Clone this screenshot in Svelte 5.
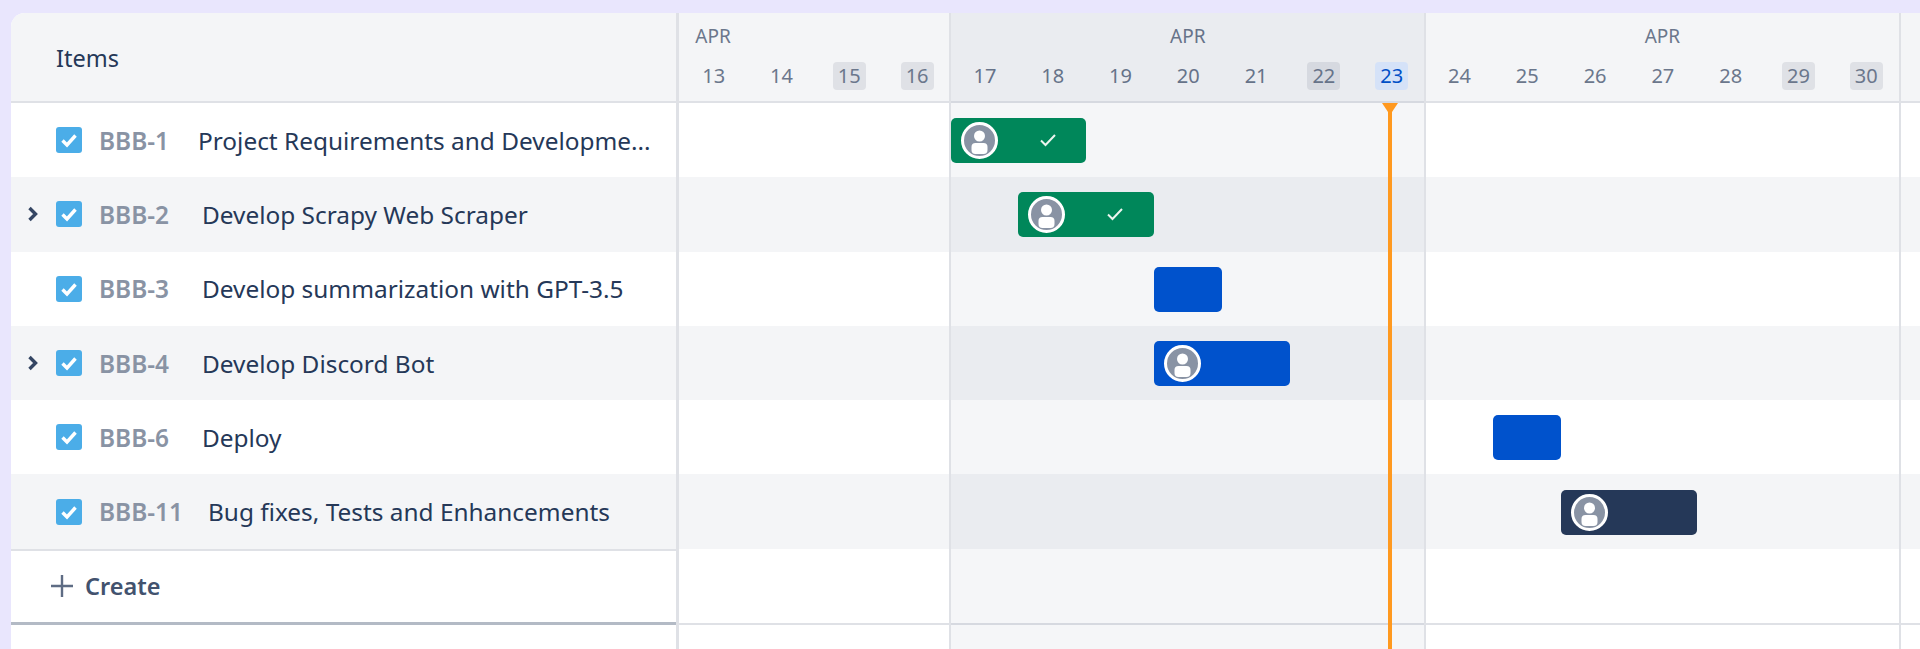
<script>
	const dayWidth = 67.8;

	const items = [
		{ key: 'BBB-1', keyWidth: 99, title: 'Project Requirements and Developme...', bar: { start: 4, days: 2, color: 'green', avatar: true, done: true } },
		{ key: 'BBB-2', keyWidth: 103, title: 'Develop Scrapy Web Scraper', expand: true, bar: { start: 5, days: 2, color: 'green', avatar: true, done: true } },
		{ key: 'BBB-3', keyWidth: 103, title: 'Develop summarization with GPT-3.5', bar: { start: 7, days: 1, color: 'blue' } },
		{ key: 'BBB-4', keyWidth: 103, title: 'Develop Discord Bot', expand: true, bar: { start: 7, days: 2, color: 'blue', avatar: true } },
		{ key: 'BBB-6', keyWidth: 103, title: 'Deploy', bar: { start: 12, days: 1, color: 'blue' } },
		{ key: 'BBB-11', keyWidth: 109, title: 'Bug fixes, Tests and Enhancements', bar: { start: 13, days: 2, color: 'navy', avatar: true } }
	];

	const weeks = [
		{ days: [13, 14, 15, 16], first: true },
		{ days: [17, 18, 19, 20, 21, 22, 23], shaded: true },
		{ days: [24, 25, 26, 27, 28, 29, 30] }
	];
	const weekend = [15, 16, 22, 29, 30];
</script>

<div class="card">
	<section class="list">
		<div class="list-head">Items</div>
		{#each items as item, i}
			<div class="item" class:alt={i % 2 === 1}>
				<span class="chevron">
					{#if item.expand}
						<svg width="12" height="16" viewBox="0 0 12 16"><path d="M2.5 2 L8.5 8 L2.5 14" fill="none" stroke="#344563" stroke-width="3.4" /></svg>
					{/if}
				</span>
				<span class="check">
					<svg width="26" height="26" viewBox="0 0 26 26"><path d="M6.5 13.5 L11 18 L19.5 8.5" fill="none" stroke="#fff" stroke-width="3.4" /></svg>
				</span>
				<span class="key" style="width:{item.keyWidth}px">{item.key}</span>
				<span class="title">{item.title}</span>
			</div>
		{/each}
		<div class="create">
			<svg width="24" height="24" viewBox="0 0 24 24"><path d="M12 1 V23 M1 12 H23" stroke="#5e6c84" stroke-width="2.4" /></svg>
			<span>Create</span>
		</div>
	</section>

	<section class="chart">
		<div class="chart-head">
			{#each weeks as week}
				<div class="week" class:first={week.first} style="width:{week.days.length * dayWidth}px">
					<div class="month">APR</div>
					<div class="days">
						{#each week.days as d}
							<div class="day">
								<span class:weekend={weekend.includes(d)} class:today={d === 23}>{d}</span>
							</div>
						{/each}
					</div>
				</div>
			{/each}
		</div>

		{#each items as item, i}
			<div class="row" class:alt={i % 2 === 1}>
				<div class="bar {item.bar.color}" style="margin-left:{item.bar.start * dayWidth + 0.1}px;width:{item.bar.days * dayWidth + 0.3}px">
					{#if item.bar.avatar}
						<span class="avatar">
							<svg width="37" height="37" viewBox="0 0 37 37">
								<circle cx="18.5" cy="18.5" r="17" fill="#8993a4" stroke="#fff" stroke-width="3" />
								<circle cx="18.5" cy="14" r="5.5" fill="#fff" />
								<rect x="10.5" y="21" width="16" height="11" rx="4" fill="#fff" />
							</svg>
						</span>
					{/if}
					{#if item.bar.done}
						<svg class="tick" width="18" height="14" viewBox="0 0 18 14"><path d="M2 7.5 L6.5 12 L16 2" fill="none" stroke="#ebf5ef" stroke-width="2" /></svg>
					{/if}
				</div>
			</div>
		{/each}
		<div class="row blank"></div>

		<!-- week columns and today marker lie over the rows -->
		<div class="columns">
			{#each weeks as week}
				<div class="column" class:shaded={week.shaded} class:first={week.first} style="width:{week.days.length * dayWidth}px"></div>
			{/each}
			<div class="column"></div>
		</div>
		<div class="now">
			<svg class="now-head" width="16" height="12" viewBox="0 0 16 12"><path d="M0 0 H16 L8 12 Z" fill="#ff991f" /></svg>
		</div>
	</section>
</div>

<style>
	:global(body) {
		background: #e9e6fd;
		overflow: hidden;
		font-family: 'Noto Sans', sans-serif;
	}
	.card {
		display: flex;
		height: 636px;
		margin: 13px 0 0 11px;
		background: #fff;
		border-top-left-radius: 14px;
		overflow: hidden;
	}
	.list {
		flex: none;
		width: 665.3px;
		border-right: 3px solid #dfe1e6;
	}
	.list-head {
		height: 86px;
		padding: 2px 0 0 45px;
		display: flex;
		align-items: center;
		background: #f4f5f7;
		border-bottom: 2px solid #dfe1e6;
		color: #253858;
		font-size: 23.5px;
	}
	.item {
		height: 74.3px;
		display: flex;
		align-items: center;
		color: #253858;
		font-size: 24.4px;
	}
	.alt {
		background: #f4f5f7;
	}
	.chevron {
		flex: none;
		width: 45px;
		padding-left: 16px;
		box-sizing: border-box;
		display: flex;
	}
	.check {
		flex: none;
		width: 26px;
		height: 26px;
		margin-right: 17px;
		border-radius: 3px;
		background: #4bade8;
		display: flex;
	}
	.key {
		flex: none;
		color: #8993a4;
		font-weight: 600;
	}
	.title {
		white-space: nowrap;
	}
	.create {
		height: 71px;
		display: flex;
		align-items: center;
		gap: 11px;
		padding-left: 39px;
		border-top: 2px solid #dfe1e6;
		border-bottom: 3px solid #b3bac5;
		color: #42526e;
		font-size: 23.5px;
		font-weight: 600;
	}
	.create svg {
		flex: none;
	}
	.chart {
		position: relative;
		flex: 1;
		min-width: 0;
		overflow: hidden;
	}
	.chart-head {
		display: flex;
		height: 88px;
		background: #f4f5f7;
		border-bottom: 2px solid #dfe1e6;
	}
	.week {
		flex: none;
		text-align: center;
		color: #6b778c;
	}
	.month {
		height: 49px;
		padding-top: 11px;
		box-sizing: border-box;
		font-size: 19px;
		line-height: 25px;
	}
	.week.first .month {
		text-align: left;
		padding-left: 16px;
	}
	.days {
		display: flex;
	}
	.day {
		flex: 1;
		display: flex;
		justify-content: center;
		font-size: 20px;
		line-height: 28px;
		padding-left: 1px;
	}
	.day span {
		padding: 0 5px;
		border-radius: 4px;
	}
	.day .weekend {
		background: #dfe1e6;
	}
	.day .today {
		background: #deebff;
		color: #0052cc;
	}
	.row {
		height: 74.3px;
		display: flex;
		align-items: center;
	}
	.row.blank {
		height: 74px;
		border-bottom: 2px solid #dfe1e6;
	}
	.bar {
		position: relative;
		z-index: 1;
		height: 45px;
		margin-top: 1px;
		box-sizing: border-box;
		border-radius: 5px;
		display: flex;
		align-items: center;
		padding-left: 10px;
	}
	.green {
		background: #00875a;
	}
	.blue {
		background: #0052cc;
	}
	.navy {
		background: #253858;
	}
	.avatar {
		display: flex;
	}
	.tick {
		position: absolute;
		left: 88px;
		top: 15px;
	}
	.columns {
		position: absolute;
		inset: 0 0 0 -1px;
		display: flex;
		pointer-events: none;
	}
	.column {
		flex: none;
		box-sizing: border-box;
		border-left: 2px solid #dfe1e6;
	}
	.column.first {
		border-left: none;
	}
	.column.shaded {
		background: rgba(9, 30, 66, 0.04);
	}
	.now {
		position: absolute;
		z-index: 2;
		top: 90px;
		bottom: 0;
		left: 709.2px;
		width: 4px;
		background: #ff991f;
	}
	.now-head {
		position: absolute;
		top: 0;
		left: -6px;
	}
</style>
